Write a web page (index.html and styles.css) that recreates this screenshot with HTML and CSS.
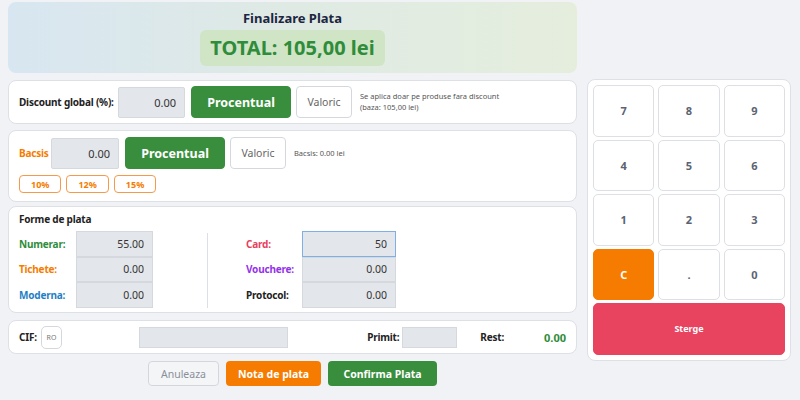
FILE: index.html
```html
<!DOCTYPE html>
<html>
<head>
    <title>Finalizare Plata</title>
    <link rel="stylesheet" href="styles.css">
</head>
<body>
    <div class="layout">
        <div class="main">
            <div class="header">
                <h1>Finalizare Plata</h1>
                <div class="total">TOTAL: 105,00 lei</div>
            </div>

            <div class="card discount-card">
                <div class="row">
                    <label class="lbl discount-lbl">Discount global (%):</label>
                    <input class="num-input" type="text" value="0.00">
                    <button class="btn-mode active">Procentual</button>
                    <button class="btn-mode">Valoric</button>
                    <div class="hint">Se aplica doar pe produse fara discount<br>(baza: 105,00 lei)</div>
                </div>
            </div>

            <div class="card tip-card">
                <div class="row">
                    <label class="lbl tip-lbl orange">Bacsis</label>
                    <input class="num-input" type="text" value="0.00">
                    <button class="btn-mode active">Procentual</button>
                    <button class="btn-mode">Valoric</button>
                    <div class="hint">Bacsis: 0.00 lei</div>
                </div>
                <div class="chips">
                    <button class="chip">10%</button>
                    <button class="chip">12%</button>
                    <button class="chip">15%</button>
                </div>
            </div>

            <div class="card pay-card">
                <div class="card-title">Forme de plata</div>
                <div class="pay-grid">
                    <div class="pay-col left">
                        <label class="lbl green">Numerar:</label>
                        <input class="pay-input" type="text" value="55.00">
                        <label class="lbl orange">Tichete:</label>
                        <input class="pay-input" type="text" value="0.00">
                        <label class="lbl blue">Moderna:</label>
                        <input class="pay-input" type="text" value="0.00">
                    </div>
                    <div class="divider"></div>
                    <div class="pay-col right">
                        <label class="lbl red">Card:</label>
                        <input class="pay-input focused" type="text" value="50">
                        <label class="lbl purple">Vouchere:</label>
                        <input class="pay-input" type="text" value="0.00">
                        <label class="lbl">Protocol:</label>
                        <input class="pay-input" type="text" value="0.00">
                    </div>
                </div>
            </div>

            <div class="card cif-card">
                <label class="lbl cif-lbl">CIF:</label>
                <span class="ro">RO</span>
                <input class="cif-input" type="text">
                <label class="lbl primit-lbl">Primit:</label>
                <input class="primit-input" type="text">
                <label class="lbl rest-lbl">Rest:</label>
                <span class="rest">0.00</span>
            </div>

            <div class="actions">
                <button class="btn cancel">Anuleaza</button>
                <button class="btn note">Nota de plata</button>
                <button class="btn confirm">Confirma Plata</button>
            </div>
        </div>

        <div class="side">
            <div class="keypad">
                <button class="key">7</button>
                <button class="key">8</button>
                <button class="key">9</button>
                <button class="key">4</button>
                <button class="key">5</button>
                <button class="key">6</button>
                <button class="key">1</button>
                <button class="key">2</button>
                <button class="key">3</button>
                <button class="key clear">C</button>
                <button class="key">.</button>
                <button class="key">0</button>
                <button class="key erase">Sterge</button>
            </div>
        </div>
    </div>
</body>
</html>
```

FILE: styles.css
```css
body {
    font-family: "Noto Sans", "Open Sans", sans-serif;
    margin: 0;
    padding: 2px 8px 0 8px;
    background-color: #f1f2f6;
    color: #222;
}
button, input {
    font-family: inherit;
}
.layout {
    display: flex;
    gap: 10px;
}
.main {
    width: 569px;
    display: flex;
    flex-direction: column;
}
.side {
    padding-top: 77px;
}

/* header */
.header {
    height: 71px;
    box-sizing: border-box;
    border-radius: 8px;
    background: linear-gradient(90deg, #d8e6f1 0%, #dfeae4 50%, #e5eedd 100%);
    display: flex;
    flex-direction: column;
    align-items: center;
    padding-top: 8px;
}
.header h1 {
    margin: 0;
    font-size: 13px;
    font-weight: bold;
    color: #1c2640;
    line-height: 16px;
}
.total {
    margin-top: 4px;
    height: 36px;
    line-height: 36px;
    padding: 0 10px;
    border-radius: 6px;
    background: #cfe5c6;
    color: #2f8c3a;
    font-size: 20px;
    font-weight: bold;
}

/* cards */
.card {
    background: #fff;
    border: 1px solid #dde0e5;
    border-radius: 8px;
    box-sizing: border-box;
}
.row {
    display: flex;
    align-items: center;
}
.lbl {
    font-size: 10px;
    letter-spacing: -0.2px;
    font-weight: bold;
    color: #222;
}
.orange { color: #f57c00; }
.green { color: #2f8c3a; }
.blue { color: #1f7fc4; }
.red { color: #e5405e; }
.purple { color: #9333ea; }

.num-input {
    width: 67px;
    height: 31px;
    box-sizing: border-box;
    border: 1px solid #d5d9de;
    background: #e3e6ea;
    text-align: right;
    padding: 0 8px;
    font-size: 11px;
    color: #333;
    border-radius: 2px;
    outline: none;
}
.btn-mode {
    height: 32px;
    border-radius: 4px;
    border: 1px solid #d4d8de;
    background: #fff;
    color: #666;
    font-size: 10.5px;
    padding: 0;
    width: 56px;
    margin-left: 5px;
}
.btn-mode.active {
    width: 100px;
    margin-left: 6px;
    background: #388e3c;
    border-color: #388e3c;
    color: #fff;
    font-size: 12.5px;
    font-weight: bold;
}
.hint {
    font-size: 7.5px;
    color: #555;
    margin-left: 8px;
    line-height: 11px;
}

.discount-card {
    margin-top: 7px;
    height: 44px;
    padding: 5px 10px 0 10px;
}
.discount-lbl {
    width: 99px;
}

.tip-card {
    margin-top: 6px;
    height: 72px;
    padding: 6px 10px 0 10px;
}
.tip-lbl {
    width: 32px;
}
.tip-card .num-input {
    width: 68px;
}
.chips {
    display: flex;
    gap: 5px;
    margin-top: 6px;
}
.chip {
    height: 18px;
    padding: 0 11px;
    border: 1px solid #f59a4a;
    border-radius: 4px;
    background: #fff;
    color: #f57c00;
    font-size: 9px;
    font-weight: bold;
}

/* payment methods */
.pay-card {
    margin-top: 4px;
    height: 107px;
    padding: 5px 10px 0 10px;
}
.card-title {
    font-size: 10px;
    letter-spacing: -0.2px;
    font-weight: bold;
    color: #222;
    line-height: 14px;
}
.pay-grid {
    display: flex;
    margin-top: 5px;
}
.pay-col {
    display: grid;
    align-items: center;
}
.pay-col.left {
    grid-template-columns: 57px 77px;
}
.pay-col.right {
    grid-template-columns: 56px 94px;
}
.divider {
    width: 1px;
    background: #dcdfe4;
    margin: 2px 38px 0 54px;
}
.pay-input {
    height: 25.5px;
    box-sizing: border-box;
    border: 1px solid #d5d9de;
    background: #e3e6ea;
    text-align: right;
    padding: 0 8px;
    font-size: 10.5px;
    color: #333;
    outline: none;
    width: 100%;
}
.pay-input.focused {
    border-color: #7fb0e3;
}

/* cif row */
.cif-card {
    margin-top: 7px;
    height: 34px;
    display: flex;
    align-items: center;
    padding: 0 10px;
}
.cif-lbl {
    width: 22px;
}
.ro {
    width: 21px;
    height: 23px;
    box-sizing: border-box;
    border: 1px solid #d4d8de;
    border-radius: 5px;
    font-size: 7px;
    color: #777;
    display: flex;
    align-items: center;
    justify-content: center;
}
.cif-input {
    margin-left: 77px;
    width: 149px;
    height: 21px;
    box-sizing: border-box;
    border: 1px solid #d5d9de;
    background: #e3e6ea;
    outline: none;
}
.primit-lbl {
    margin-left: auto;
}
.primit-input {
    margin-left: 3px;
    width: 55px;
    height: 21px;
    box-sizing: border-box;
    border: 1px solid #d5d9de;
    background: #e3e6ea;
    outline: none;
}
.rest-lbl {
    margin-left: 23px;
}
.rest {
    margin-left: 40px;
    font-size: 11px;
    font-weight: bold;
    color: #2f8c3a;
}

/* bottom buttons */
.actions {
    display: flex;
    justify-content: center;
    gap: 7px;
    margin-top: 7px;
}
.btn {
    height: 25px;
    border-radius: 4px;
    font-size: 10.5px;
    font-weight: bold;
    border: 1px solid transparent;
    color: #fff;
    padding: 0;
}
.btn.cancel {
    width: 71px;
    background: #f4f5f7;
    border-color: #d3d7dc;
    color: #8a9099;
    font-weight: normal;
}
.btn.note {
    width: 95px;
    background: #f57c00;
}
.btn.confirm {
    width: 109px;
    background: #388e3c;
}

/* keypad */
.keypad {
    width: 204px;
    height: 282px;
    box-sizing: border-box;
    background: #fff;
    border: 1px solid #dde0e5;
    border-radius: 8px;
    padding: 5px 5px 0 5px;
    display: grid;
    grid-template-columns: repeat(3, 1fr);
    grid-template-rows: repeat(5, 51.5px);
    gap: 3px 4px;
}
.key {
    border: 1px solid #dcdfe4;
    border-radius: 5px;
    background: #fff;
    color: #5b6372;
    font-size: 11px;
    font-weight: bold;
}
.key.clear {
    background: #f57c00;
    border-color: #f57c00;
    color: #fff;
}
.key.erase {
    grid-column: 1 / span 3;
    background: #e8435f;
    border-color: #e8435f;
    color: #fff;
    font-size: 9px;
}
```
